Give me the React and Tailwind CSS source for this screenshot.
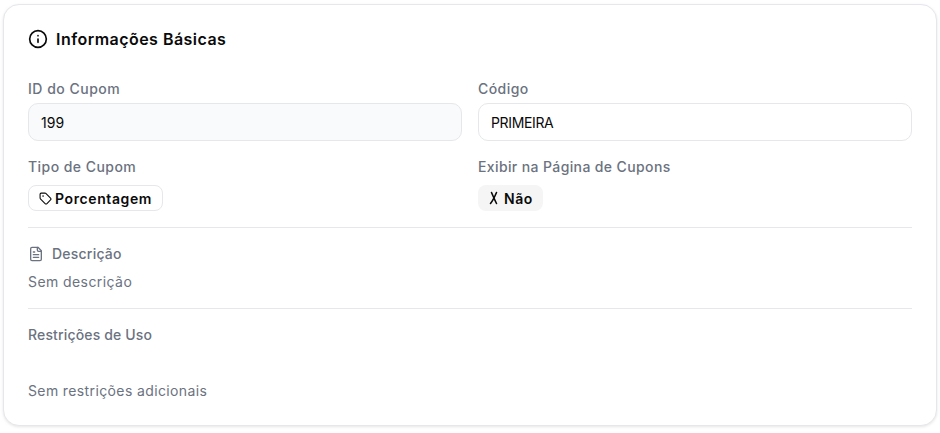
const font = { fontFamily: '"Inter", "Noto Sans", sans-serif' };

function Label({ children, tracking = "tracking-[0.45px]" }) {
  return <div className={`text-[14px] leading-[20px] font-medium text-[#6b7280] ${tracking}`}>{children}</div>;
}

export default function App() {
  return (
    <div style={font} className="bg-white pl-[3px] pt-1 w-[940px] h-[433px]">
      <div className="w-[934px] h-[422px] rounded-2xl border border-[#e5e7eb] bg-white px-6 pt-[23px] shadow-[0_1px_3px_rgba(0,0,0,0.1)]">
        <div className="flex items-center gap-2 h-[22px]">
          <svg width="20" height="20" viewBox="0 0 24 24" fill="none" stroke="#0a0a0a" strokeWidth="2" strokeLinecap="round" strokeLinejoin="round">
            <circle cx="12" cy="12" r="10" />
            <path d="M12 16v-4" />
            <path d="M12 8h.01" />
          </svg>
          <div className="text-[16px] leading-[22px] font-semibold text-[#0a0a0a] tracking-[0.47px]">Informações Básicas</div>
        </div>

        <div className="grid grid-cols-2 gap-x-4 mt-[29px]">
          <div>
            <Label tracking="tracking-[0.5px]">ID do Cupom</Label>
            <div className="mt-1 h-[38px] rounded-[10px] border border-[#e5e7eb] bg-[#f9fafb] px-3 flex items-center text-[14px] text-[#0a0a0a]">199</div>
          </div>
          <div>
            <Label>Código</Label>
            <div className="mt-1 h-[38px] rounded-[10px] border border-[#e5e7eb] bg-white px-3 flex items-center text-[14px] tracking-[-0.35px] text-[#0a0a0a]">PRIMEIRA</div>
          </div>
          <div className="mt-4">
            <Label>Tipo de Cupom</Label>
            <div className="mt-2 inline-flex items-center gap-[3px] h-[26px] rounded-lg border border-[#e5e7eb] bg-white px-[10px] text-[14px] font-semibold tracking-[0.6px] text-[#0a0a0a]">
              <svg width="13" height="13" viewBox="0 0 24 24" fill="none" stroke="#0a0a0a" strokeWidth="2" strokeLinecap="round" strokeLinejoin="round">
                <path d="M12.586 2.586A2 2 0 0 0 11.172 2H4a2 2 0 0 0-2 2v7.172a2 2 0 0 0 .586 1.414l8.704 8.704a2.426 2.426 0 0 0 3.42 0l6.58-6.58a2.426 2.426 0 0 0 0-3.42z" />
                <circle cx="7.5" cy="7.5" r=".5" fill="#0a0a0a" />
              </svg>
              Porcentagem
            </div>
          </div>
          <div className="mt-4">
            <Label tracking="tracking-[0.38px]">Exibir na Página de Cupons</Label>
            <div className="mt-2 inline-flex items-center gap-1 h-[26px] rounded-lg bg-[#f5f5f5] px-[10px] text-[14px] font-semibold tracking-[0.6px] text-[#0a0a0a]">
              <svg width="12" height="14" viewBox="0 0 12 14" fill="none" stroke="#0a0a0a" strokeWidth="1.6" strokeLinecap="round">
                <path d="M3.5 1.5C5 5 7 9.5 8.5 12.5" />
                <path d="M8.5 1.5C7 5 5 9.5 2.5 12.5" />
              </svg>
              Não
            </div>
          </div>
        </div>

        <div className="mt-4 border-t border-[#e5e7eb] pt-4">
          <div className="flex items-center gap-2 h-[20px]">
            <svg width="16" height="16" viewBox="0 0 24 24" fill="none" stroke="#6b7280" strokeWidth="2" strokeLinecap="round" strokeLinejoin="round">
              <path d="M15 2H6a2 2 0 0 0-2 2v16a2 2 0 0 0 2 2h12a2 2 0 0 0 2-2V7Z" />
              <path d="M14 2v4a2 2 0 0 0 2 2h4" />
              <path d="M10 9H8" />
              <path d="M16 13H8" />
              <path d="M16 17H8" />
            </svg>
            <Label tracking="tracking-[0.22px]">Descrição</Label>
          </div>
          <div className="mt-2 text-[14px] leading-[20px] tracking-[0.42px] text-[#6b7280]">Sem descrição</div>
        </div>

        <div className="mt-4 border-t border-[#e5e7eb] pt-4">
          <Label tracking="tracking-[0.15px]">Restrições de Uso</Label>
          <div className="mt-[36px] text-[14px] leading-[20px] tracking-[0.38px] text-[#6b7280]">Sem restrições adicionais</div>
        </div>
      </div>
    </div>
  );
}
